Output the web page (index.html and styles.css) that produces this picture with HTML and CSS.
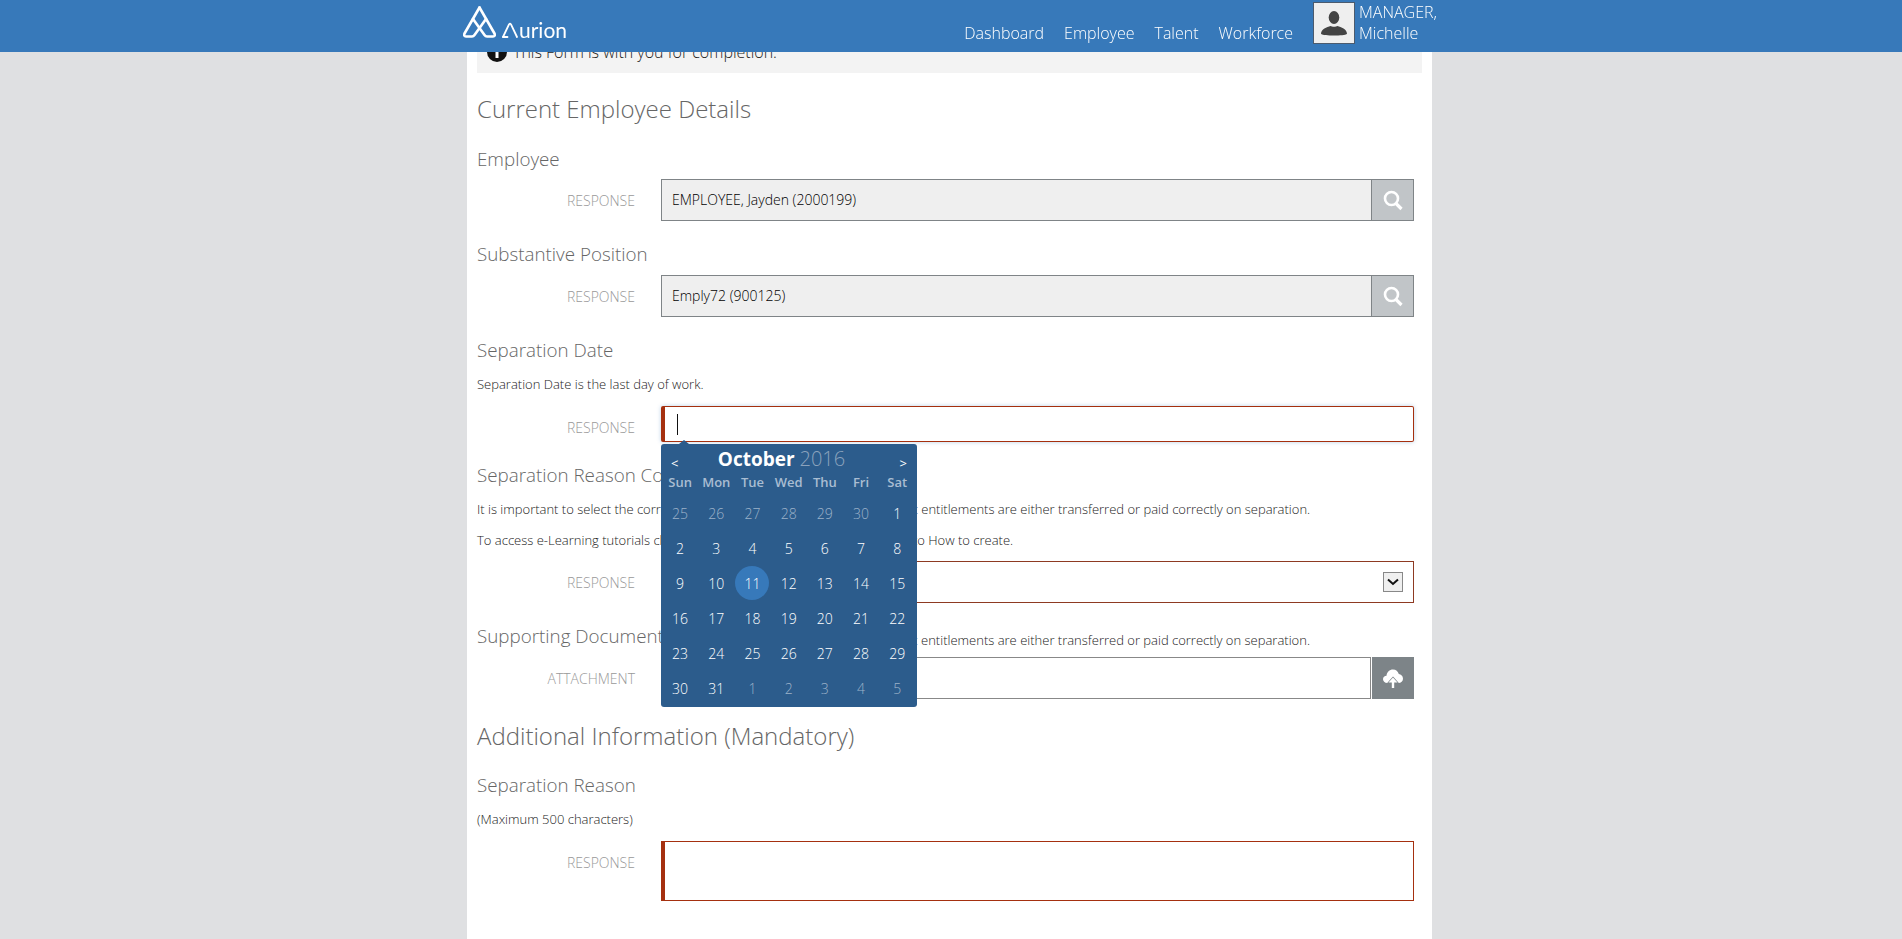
FILE: index.html
```html
<!DOCTYPE html>
<html lang="en">
<head>
    <meta charset="UTF-8">
    <meta name="viewport" content="width=device-width, initial-scale=1.0">
    <title>Aurion - Separation Form</title>
    <link rel="stylesheet" href="styles.css">
</head>
<body>
    <header class="topbar">
        <div class="topbar-inner">
            <a class="logo" href="#">
                <svg class="logo-mark" width="33" height="32" viewBox="0 0 33 32" fill="none" stroke="#fff" stroke-width="2.6" stroke-linejoin="round" stroke-linecap="round">
                    <path d="M16.5 1.5 L1.5 27.5 Q0.5 30.5 3 30.5 L9 30.5 Q10.5 30.5 11.5 29 L23 13"/>
                    <path d="M16.5 1.5 L31.5 27.5 Q32.5 30.5 30 30.5 L24 30.5 Q22.5 30.5 21.5 29 L10 13"/>
                </svg>
                <svg class="logo-a" width="16" height="16" viewBox="0 0 16 16" fill="none" stroke="#fff" stroke-width="1.8" stroke-linejoin="round" stroke-linecap="round">
                    <path d="M1 15 H5.5"/>
                    <path d="M1 15 L7 2.4 Q8 1 9 2.4 L15 15"/>
                </svg>
                <span class="logo-text">urion</span>
            </a>
            <nav class="nav">
                <a href="#">Dashboard</a>
                <a href="#">Employee</a>
                <a href="#">Talent</a>
                <a href="#">Workforce</a>
            </nav>
            <div class="user">
                <div class="avatar">
                    <svg width="28" height="28" viewBox="0 0 28 28" fill="#444">
                        <ellipse cx="14" cy="8.5" rx="5.3" ry="6.5"/>
                        <path d="M1 25 C1 19.5 7 18.5 10.5 17 C12 18 16 18 17.5 17 C21 18.5 27 19.5 27 25 C24 27 4 27 1 25 Z"/>
                    </svg>
                </div>
                <div class="user-name">MANAGER,<br>Michelle</div>
            </div>
        </div>
    </header>

    <main class="page">
        <div class="banner">
            <svg class="banner-icon" width="20" height="20" viewBox="0 0 20 20">
                <circle cx="10" cy="10" r="10" fill="#111"/>
                <rect x="8.5" y="8" width="3" height="8" fill="#fff"/>
                <circle cx="10" cy="5" r="1.8" fill="#fff"/>
            </svg>
            <span>This Form is with you for completion.</span>
        </div>

        <h2 class="section-title">Current Employee Details</h2>

        <h3 class="question question-first">Employee</h3>
        <div class="field-row">
            <label class="field-label">RESPONSE</label>
            <div class="field field-readonly">
                <div class="field-value">EMPLOYEE, Jayden (2000199)</div>
                <button class="field-btn">
                    <svg width="20" height="21" viewBox="0 0 20 21" fill="none" stroke="#fff" stroke-width="2.6">
                        <circle cx="8.5" cy="8.5" r="6.5"/>
                        <path d="M13 13.5 L18.5 19" stroke-width="3.2"/>
                    </svg>
                </button>
            </div>
        </div>

        <h3 class="question">Substantive Position</h3>
        <div class="field-row">
            <label class="field-label">RESPONSE</label>
            <div class="field field-readonly">
                <div class="field-value">Emply72 (900125)</div>
                <button class="field-btn">
                    <svg width="20" height="21" viewBox="0 0 20 21" fill="none" stroke="#fff" stroke-width="2.6">
                        <circle cx="8.5" cy="8.5" r="6.5"/>
                        <path d="M13 13.5 L18.5 19" stroke-width="3.2"/>
                    </svg>
                </button>
            </div>
        </div>

        <h3 class="question">Separation Date</h3>
        <p class="hint">Separation Date is the last day of work.</p>
        <div class="field-row field-row-date">
            <label class="field-label">RESPONSE</label>
            <div class="field field-date">
                <span class="caret"></span>
                <div class="calendar">
                    <div class="cal-head">
                        <span class="cal-arrow">&lt;</span>
                        <span class="cal-title"><b>October</b> <span class="cal-year">2016</span></span>
                        <span class="cal-arrow">&gt;</span>
                    </div>
                    <div class="cal-grid cal-days">
                        <span>Sun</span><span>Mon</span><span>Tue</span><span>Wed</span><span>Thu</span><span>Fri</span><span>Sat</span>
                    </div>
                    <div class="cal-grid cal-dates">
                        <span class="other">25</span><span class="other">26</span><span class="other">27</span><span class="other">28</span><span class="other">29</span><span class="other">30</span><span>1</span>
                        <span>2</span><span>3</span><span>4</span><span>5</span><span>6</span><span>7</span><span>8</span>
                        <span>9</span><span>10</span><span class="today">11</span><span>12</span><span>13</span><span>14</span><span>15</span>
                        <span>16</span><span>17</span><span>18</span><span>19</span><span>20</span><span>21</span><span>22</span>
                        <span>23</span><span>24</span><span>25</span><span>26</span><span>27</span><span>28</span><span>29</span>
                        <span>30</span><span>31</span><span class="other">1</span><span class="other">2</span><span class="other">3</span><span class="other">4</span><span class="other">5</span>
                    </div>
                </div>
            </div>
        </div>

        <h3 class="question">Separation Reason Code</h3>
        <p class="hint">It is important to select the correct Separation Reason Codes to ensure that entitlements are either transferred or paid correctly on separation.</p>
        <p class="hint hint-tight">To access e-Learning tutorials click here then pick Separation and navigate to How to create.</p>
        <div class="field-row field-row-select">
            <label class="field-label">RESPONSE</label>
            <div class="field field-select">
                <span class="select-arrow">
                    <svg width="12" height="8" viewBox="0 0 12 8" fill="none" stroke="#111" stroke-width="2"><path d="M1 1.5 L6 6 L11 1.5"/></svg>
                </span>
            </div>
        </div>

        <div class="question-row">
            <h3 class="question">Supporting Documents</h3>
            <p class="hint">to ensure that entitlements are either transferred or paid correctly on separation.</p>
        </div>
        <div class="field-row field-row-tight">
            <label class="field-label">ATTACHMENT</label>
            <div class="field field-upload">
                <div class="field-value"></div>
                <button class="upload-btn">
                    <svg width="20" height="19" viewBox="0 0 20 19" fill="#fff">
                        <path d="M4.5 14 C1.5 14 0 12 0 10.2 C0 8 1.6 6.8 3.5 6.8 C3.8 3 6.5 0.5 10 0.5 C13 0.5 15 2.3 15.8 5 C18 5.2 20 7 20 9.7 C20 12.2 18 14 15.5 14 Z"/>
                        <path class="upload-arrow" d="M10 8.5 L14.5 13.5 L11.2 13.5 L11.2 19 L8.8 19 L8.8 13.5 L5.5 13.5 Z"/>
                    </svg>
                </button>
            </div>
        </div>

        <h2 class="section-title section-title-second">Additional Information (Mandatory)</h2>

        <h3 class="question">Separation Reason</h3>
        <p class="hint">(Maximum 500 characters)</p>
        <div class="field-row field-row-text">
            <label class="field-label">RESPONSE</label>
            <div class="field field-text"></div>
        </div>

        <p class="hint hint-last">Additional Information</p>
    </main>
</body>
</html>
```

FILE: styles.css
```css
html, body {
    height: 100%;
    margin: 0;
    overflow: hidden;
}
body {
    padding-right: 3px;
    box-sizing: border-box;
    background-color: #dfe0e2;
    font-family: "Open Sans", sans-serif;
    color: #333;
}
.topbar {
    position: fixed;
    top: 0;
    left: 0;
    right: 3px;
    height: 52px;
    background-color: #3779ba;
    box-shadow: 3px 0 0 #3779ba;
    z-index: 10;
}
.topbar-inner {
    width: 965px;
    height: 52px;
    margin: 0 auto;
    display: flex;
}
.logo {
    display: flex;
    align-items: flex-end;
    margin-left: -4px;
    padding-bottom: 14px;
    color: #fff;
    text-decoration: none;
    flex: 1;
}
.logo-a {
    margin-left: 6px;
}
.logo-text {
    font-family: Lato, sans-serif;
    font-size: 21px;
    line-height: 16px;
    margin-left: 1px;
}
.nav {
    display: flex;
    gap: 20px;
    padding-top: 22px;
    font-size: 16px;
    font-weight: 300;
    line-height: 22px;
}
.nav a {
    color: #fff;
    text-decoration: none;
}
.user {
    display: flex;
    gap: 4px;
    margin-left: 20px;
    padding-top: 2px;
    width: 119px;
}
.avatar {
    flex: none;
    width: 40px;
    height: 40px;
    background-color: #efefef;
    border: 1px solid #4b5b6e;
    display: flex;
    align-items: center;
    justify-content: center;
}
.user-name {
    color: #fff;
    font-size: 16px;
    font-weight: 300;
    line-height: 21px;
    white-space: nowrap;
}
.page {
    width: 945px;
    margin: 0 auto;
    padding: 0 10px;
    height: 100%;
    background-color: #fff;
}
.banner {
    height: 73px;
    background-color: #f3f3f3;
    display: flex;
    gap: 6px;
    padding: 41px 0 0 10px;
    box-sizing: border-box;
    font-size: 16px;
    font-weight: 300;
    line-height: 22px;
    color: #222;
}
.banner-icon {
    flex: none;
    margin-top: 1px;
}
.section-title {
    margin: 20px 0 0;
    font-size: 24px;
    font-weight: 300;
    line-height: 32px;
    color: #666;
}
.section-title-second {
    margin-top: 21px;
}
.question {
    margin: 21px 0 9px;
    font-size: 18.8px;
    font-weight: 300;
    line-height: 24px;
    color: #666;
}
.question-first {
    margin-top: 22px;
    margin-bottom: 8px;
}
.hint {
    margin: 13px 0;
    font-size: 13px;
    font-weight: 300;
    line-height: 18px;
    color: #222;
    white-space: nowrap;
}
.hint-tight {
    margin-bottom: 12px;
}
.hint-last {
    margin-top: 34px;
}
.question-row {
    display: flex;
    justify-content: space-between;
    align-items: flex-start;
    height: 24px;
    margin-top: 21px;
    padding-right: 112px;
}
.question-row .question {
    margin: 0;
}
.question-row .hint {
    margin: 7px 0 0;
}
.field-row {
    display: flex;
    padding-right: 8px;
    margin-top: 13px;
}
.question + .field-row {
    margin-top: 0;
}
.field-row-tight {
    margin-top: 9px;
}
.field-row-select {
    margin-top: 12px;
}
.field-row-date {
    height: 36px;
}
.field-row-text {
    height: 60px;
}
.field-label {
    width: 158px;
    height: 42px;
    margin-right: 26px;
    flex: none;
    display: flex;
    align-items: center;
    justify-content: flex-end;
    font-size: 14px;
    font-weight: 300;
    color: #999;
}
.field {
    flex: 1;
    box-sizing: border-box;
    display: flex;
    position: relative;
}
.field-readonly {
    height: 42px;
    border: 1px solid #7f8487;
    background-color: #efefef;
}
.field-value {
    flex: 1;
    padding-left: 10px;
    font-size: 14px;
    line-height: 40px;
    font-weight: 300;
    color: #000;
}
.field-btn {
    width: 42px;
    padding: 0;
    border: 0;
    border-left: 1px solid #7f8487;
    background-color: #c1c5c8;
    display: flex;
    align-items: center;
    justify-content: center;
}
.field-date {
    height: 36px;
    border: 1px solid #a5300f;
    border-left-width: 4px;
    border-radius: 2px;
    box-shadow: 0 0 4px rgba(55, 121, 186, 0.35);
}
.caret {
    width: 1px;
    height: 21px;
    margin: 7px 0 0 12px;
    background-color: #111;
}
.field-select {
    height: 42px;
    border: 1px solid #8e3a22;
    justify-content: flex-end;
    align-items: center;
    padding-right: 10px;
}
.select-arrow {
    width: 18px;
    height: 18px;
    border: 1px solid #888;
    background-color: #efefef;
    display: flex;
    align-items: center;
    justify-content: center;
}
.field-upload {
    height: 42px;
    gap: 1px;
}
.field-upload .field-value {
    border: 1px solid #888;
    background-color: #fff;
}
.upload-btn {
    width: 42px;
    padding: 0;
    border: 0;
    background-color: #7d8488;
    display: flex;
    align-items: center;
    justify-content: center;
}
.upload-arrow {
    stroke: #7d8488;
    stroke-width: 1.4px;
    paint-order: stroke;
}
.field-text {
    height: 60px;
    border: 1px solid #a5300f;
    border-left-width: 4px;
}
.calendar {
    position: absolute;
    top: 37px;
    left: -4px;
    width: 256px;
    height: 263px;
    box-sizing: border-box;
    padding: 0 1px;
    background-color: #2c5c8c;
    border-radius: 3px;
    color: #fff;
    z-index: 5;
}
.calendar::before {
    content: "";
    position: absolute;
    top: -4px;
    left: 18px;
    border-left: 5px solid transparent;
    border-right: 5px solid transparent;
    border-bottom: 4px solid #2c5c8c;
}
.cal-head {
    display: flex;
    justify-content: space-between;
    align-items: center;
    height: 25px;
    padding: 2px 9px 0;
}
.cal-arrow {
    font-size: 13px;
    line-height: 13px;
    padding-top: 10px;
}
.cal-title {
    font-size: 19px;
    line-height: 26px;
    margin-right: 15px;
}
.cal-title b {
    font-weight: 700;
}
.cal-year {
    font-size: 20px;
    font-weight: 300;
    color: #8ba3bd;
}
.cal-grid {
    display: grid;
    grid-template-columns: repeat(7, 36.2px);
    text-align: center;
}
.cal-days {
    height: 22px;
    font-size: 13px;
    font-weight: 600;
    line-height: 22px;
    color: #a9bdd2;
}
.cal-dates {
    grid-auto-rows: 35px;
    padding-top: 3px;
    font-size: 14px;
    font-weight: 300;
}
.cal-dates span {
    display: flex;
    align-items: center;
    justify-content: center;
}
.cal-dates .other {
    color: #9cb2c9;
}
.cal-dates .today {
    width: 34px;
    height: 34px;
    margin: 0 auto;
    border-radius: 50%;
    background-color: #3779ba;
}
```
